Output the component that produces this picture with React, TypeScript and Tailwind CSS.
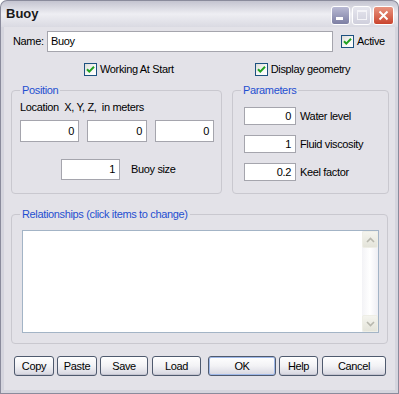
import React from "react"

function Check({ label, className = "" }: { label: string; className?: string }) {
    return (
        <div className={"flex items-center " + className}>
            <span className="w-[13px] h-[13px] shrink-0 border border-[#1c5180] bg-gradient-to-br from-[#dcdcd7] via-[#f6f6f4] to-white flex items-center justify-center">
                <svg width="11" height="11" viewBox="0 0 11 11">
                    <path d="M2 5.2 L4.3 7.6 L9 2.8" fill="none" stroke="#21a121" strokeWidth="2" />
                </svg>
            </span>
            <span className="ml-[3px] leading-[13px] whitespace-nowrap">{label}</span>
        </div>
    )
}

function Field({ value, className = "" }: { value: string; className?: string }) {
    return (
        <div className={"shrink-0 bg-white border border-[#a5a5ad] flex items-center justify-end pr-[4px] " + className}>
            {value}
        </div>
    )
}

function Group({ title, className = "", children }: { title: string; className?: string; children?: React.ReactNode }) {
    return (
        <div className={"relative shrink-0 border border-[#c9c8cf] rounded-[4px] " + className}>
            <span className="absolute left-[8px] top-[-8px] px-[2px] bg-[#e3e2e8] text-[#1f4fd0] leading-[14px] whitespace-nowrap">
                {title}
            </span>
            {children}
        </div>
    )
}

function Btn({ label, w, def = false }: { label: string; w: string; def?: boolean }) {
    return (
        <div
            className={
                w +
                " shrink-0 h-[20px] rounded-[3px] border border-[#4f5a6e] bg-gradient-to-b from-white via-[#f2f2f5] to-[#d6d6e0] flex items-center justify-center " +
                (def ? "shadow-[inset_0_0_0_1px_#9fb8e8]" : "shadow-[inset_0_-1px_0_#c4c4d0]")
            }
        >
            {label}
        </div>
    )
}

export default function App() {
    return (
        <div className="w-[399px] h-[394px] flex flex-col font-['Liberation_Sans',sans-serif] text-[11px] tracking-[-0.35px] text-black select-none">
            {/* title bar */}
            <div className="h-[27px] shrink-0 rounded-t-[7px] border border-b-0 border-[#8a8b9c] bg-gradient-to-b from-[#c4c4d0] via-[#eeeef3] to-[#dadae2] flex items-center pl-[5px] pr-[4px]">
                <span className="font-bold text-[13px] text-[#1a1a1a] tracking-[0px]">Buoy</span>
                <div className="ml-auto flex items-center gap-[2px] mt-[2px]">
                    <div className="w-[19px] h-[19px] rounded-[3px] border border-white bg-gradient-to-b from-[#b9bad4] to-[#7d7fa3] flex items-end pl-[4px] pb-[4px]">
                        <div className="w-[7px] h-[3px] bg-white" />
                    </div>
                    <div className="w-[19px] h-[19px] rounded-[3px] border border-white bg-gradient-to-b from-[#e6e6ee] to-[#cfcfdc] flex items-center justify-center">
                        <div className="w-[10px] h-[10px] border border-[#f4f4f8] border-t-2" />
                    </div>
                    <div className="w-[21px] h-[19px] rounded-[3px] border border-white bg-gradient-to-b from-[#e8937f] to-[#c9422c] flex items-center justify-center">
                        <svg width="11" height="11" viewBox="0 0 11 11">
                            <path d="M1.5 1.5 L9.5 9.5 M9.5 1.5 L1.5 9.5" stroke="white" strokeWidth="2" />
                        </svg>
                    </div>
                </div>
            </div>

            {/* body with frame */}
            <div className="flex-1 border-x border-b border-[#8a8b9c] bg-[#d5d5de] px-[3px] pb-[3px]">
                <div className="h-full bg-[#e3e2e8] flex flex-col">
                    {/* name row */}
                    <div className="mt-[4px] h-[21px] flex items-center">
                        <span className="ml-[9px] w-[34px] shrink-0">Name:</span>
                        <div className="w-[286px] h-[21px] shrink-0 bg-white border border-[#a5a5ad] flex items-center pl-[3px]">
                            Buoy
                        </div>
                        <Check label="Active" className="ml-[8px]" />
                    </div>

                    {/* options row */}
                    <div className="mt-[11px] flex">
                        <Check label="Working At Start" className="ml-[80px]" />
                        <Check label="Display geometry" className="ml-[81px]" />
                    </div>

                    {/* groups */}
                    <div className="mt-[14px] flex ml-[7px]">
                        <Group title="Position" className="w-[211px] h-[104px]">
                            <div className="pt-[10px] pl-[8px] leading-[13px] whitespace-pre">Location  X, Y, Z,  in meters</div>
                            <div className="mt-[6px] ml-[8px] flex gap-[8px]">
                                <Field value="0" className="w-[59px] h-[22px]" />
                                <Field value="0" className="w-[60px] h-[22px]" />
                                <Field value="0" className="w-[59px] h-[22px]" />
                            </div>
                            <div className="mt-[17px] ml-[49px] flex items-center">
                                <Field value="1" className="w-[59px] h-[21px]" />
                                <span className="ml-[11px]">Buoy size</span>
                            </div>
                        </Group>
                        <Group title="Parameters" className="ml-[10px] w-[157px] h-[104px]">
                            <div className="pt-[16px] pl-[11px] flex flex-col gap-[10px]">
                                {[
                                    ["0", "Water level"],
                                    ["1", "Fluid viscosity"],
                                    ["0.2", "Keel factor"],
                                ].map(([v, l]) => (
                                    <div key={l} className="flex items-center">
                                        <Field value={v} className="w-[52px] h-[18px]" />
                                        <span className="ml-[4px]">{l}</span>
                                    </div>
                                ))}
                            </div>
                        </Group>
                    </div>

                    {/* relationships */}
                    <Group title="Relationships (click items to change)" className="mt-[20px] ml-[7px] w-[377px] h-[130px]">
                        <div className="mt-[15px] ml-[10px] w-[357px] h-[103px] bg-white border border-[#a3b4c6] flex justify-end">
                            <div className="w-[16px] h-full bg-gradient-to-r from-[#f3f3f6] via-white to-[#eeeef3] flex flex-col justify-between">
                                <div className="h-[17px] rounded-[2px] bg-gradient-to-b from-[#f4f4ee] to-[#e4e4da] border border-[#eeeee6] flex items-center justify-center">
                                    <svg width="9" height="6" viewBox="0 0 9 6">
                                        <path d="M1 5 L4.5 1.5 L8 5" fill="none" stroke="#b8b8ae" strokeWidth="1.6" />
                                    </svg>
                                </div>
                                <div className="h-[17px] rounded-[2px] bg-gradient-to-b from-[#f4f4ee] to-[#e4e4da] border border-[#eeeee6] flex items-center justify-center">
                                    <svg width="9" height="6" viewBox="0 0 9 6">
                                        <path d="M1 1 L4.5 4.5 L8 1" fill="none" stroke="#b8b8ae" strokeWidth="1.6" />
                                    </svg>
                                </div>
                            </div>
                        </div>
                    </Group>

                    {/* buttons */}
                    <div className="mt-[12px] ml-[10px] flex">
                        <Btn label="Copy" w="w-[40px]" />
                        <div className="w-[3px]" />
                        <Btn label="Paste" w="w-[40px]" />
                        <div className="w-[3px]" />
                        <Btn label="Save" w="w-[48px]" />
                        <div className="w-[4px]" />
                        <Btn label="Load" w="w-[49px]" />
                        <div className="w-[7px]" />
                        <Btn label="OK" w="w-[68px]" def />
                        <div className="w-[3px]" />
                        <Btn label="Help" w="w-[39px]" />
                        <div className="w-[4px]" />
                        <Btn label="Cancel" w="w-[64px]" />
                    </div>
                </div>
            </div>
        </div>
    )
}
